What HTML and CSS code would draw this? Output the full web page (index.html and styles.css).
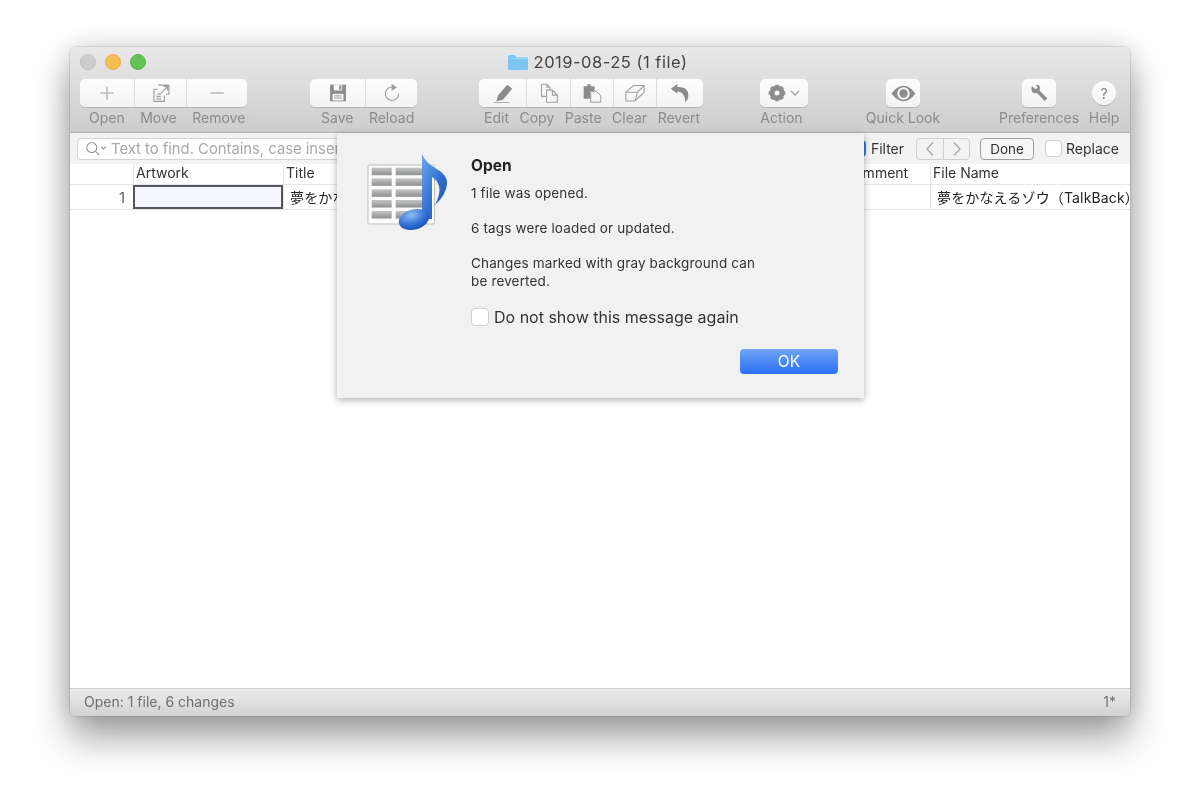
FILE: index.html
```html
<!DOCTYPE html>
<html lang="en">
<head>
<meta charset="utf-8">
<title>2019-08-25 (1 file)</title>
<link rel="stylesheet" href="styles.css">
</head>
<body>
<div class="window">
  <header class="chrome">
    <div class="titlebar">
      <div class="lights"><span class="light gray"></span><span class="light yellow"></span><span class="light green"></span></div>
      <div class="doc-title">
        <svg class="folder" viewBox="0 0 20 16"><path d="M0 2.500Q0 1 1.500 1H7l1.500 2H18.500Q20 3 20 4.500V14.500Q20 16 18.500 16H1.500Q0 16 0 14.500Z" fill="#7cc4f2"/><path d="M0 5H20V4.200Q20 3 18.500 3H8.500L7 4.500H0Z" fill="#9bd4f7"/></svg>
        <span>2019-08-25 (1 file)</span>
      </div>
      <div></div>
    </div>
    <div class="toolbar">
      <div class="group g1">
        <div class="btns">
          <div class="btn w54"><svg viewBox="0 0 24 24"><path d="M12 4V20M4 12H20" class="ln"/></svg></div>
          <div class="btn w52"><svg viewBox="0 0 24 24"><path d="M8 7.500H3.500V22H16V15M8 13H12M6.500 16H12M6.500 19H12" class="ln"/><path d="M8.500 2.500H21.500V13.500H18M20 4L12 12M15 4H20V9" class="ln"/></svg></div>
          <div class="btn w61"><svg viewBox="0 0 24 24"><path d="M4 12H20" class="ln"/></svg></div>
        </div>
        <div class="labels"><span>Open</span><span>Move</span><span>Remove</span></div>
      </div>
      <div class="group g2">
        <div class="btns">
          <div class="btn w55"><svg viewBox="0 0 24 24"><path d="M2.500 2H21.500V22H2.500Z" fill="#8c8c8c"/><path d="M7 2H17V9H7Z" fill="#f6f6f6"/><path d="M13.500 3H16V8H13.500Z" fill="#8c8c8c"/><path d="M5.500 13H18.500V21H5.500Z" fill="#f6f6f6"/><path d="M7.500 15.500H16.500M7.500 18H16.500" stroke="#8c8c8c" fill="none"/></svg></div>
          <div class="btn w52"><svg viewBox="0 0 24 24"><path d="M15 5.500A8 8 0 1 0 20 12.500" class="ln"/><path d="M11.500 1L18 5.500L11.500 9.500Z" fill="#a0a0a0"/></svg></div>
        </div>
        <div class="labels"><span>Save</span><span>Reload</span></div>
      </div>
      <div class="group g3">
        <div class="btns">
          <div class="btn w47"><svg viewBox="0 0 24 24"><path d="M6 15L17 2L23 7L12 20L4 22Z" fill="#8c8c8c"/><path d="M1 23.500H20" stroke="#b0b0b0" stroke-width="1.500"/></svg></div>
          <div class="btn w44"><svg viewBox="0 0 24 24"><path d="M3 1.500H9.500L13 5V8.500M3 1.500V16H9M9.500 1.500V5H13" class="ln"/><path d="M9 8.500H16L22 14.500V23H9Z M16 8.500V14.500H22" class="ln"/></svg></div>
          <div class="btn w43"><svg viewBox="0 0 24 24"><path d="M2 4H6.500V1.500H10.500V4H15V9.500H10V19H2Z" fill="#8c8c8c"/><path d="M10.500 10H17L22.500 15V23H10.500Z" fill="#f6f6f6" stroke="#8c8c8c"/></svg></div>
          <div class="btn w43"><svg viewBox="0 0 24 24"><path d="M1 11L10 3H23V11L12 21.500H1Z M1 11H15L23 3M15 11L12 21.500" class="ln"/></svg></div>
          <div class="btn w47"><svg viewBox="0 0 24 24"><path d="M1 7L9 1V13Z" fill="#8c8c8c"/><path d="M8 5Q22 4 22 15Q22 20 18 23Q19 11 8 10Z" fill="#8c8c8c"/></svg></div>
        </div>
        <div class="labels"><span>Edit</span><span>Copy</span><span>Paste</span><span>Clear</span><span>Revert</span></div>
      </div>
      <div class="group g4">
        <div class="btns">
          <div class="btn w48 action"><svg class="gear" viewBox="0 0 24 24"><circle cx="12" cy="12" r="6.500" fill="none" stroke="#8c8c8c" stroke-width="5"/><path d="M12 2V22M2 12H22M5 5L19 19M19 5L5 19" stroke="#8c8c8c" stroke-width="4"/><circle cx="12" cy="12" r="3" fill="#f6f6f6"/></svg><svg class="chev" viewBox="0 0 12 8"><path d="M2 2L6 6L10 2" class="ln"/></svg></div>
        </div>
        <div class="labels"><span>Action</span></div>
      </div>
      <div class="group g5">
        <div class="btns">
          <div class="btn solo eye"><svg viewBox="0 0 24 24"><path d="M0.500 12Q6 4.500 12 4.500Q18 4.500 23.500 12Q18 19.500 12 19.500Q6 19.500 0.500 12Z" fill="#8c8c8c"/><circle cx="12" cy="12" r="6" fill="#f6f6f6"/><circle cx="12" cy="12" r="4" fill="#8c8c8c"/></svg></div>
        </div>
        <div class="labels"><span>Quick Look</span></div>
      </div>
      <div class="group g6">
        <div class="btns">
          <div class="btn solo"><svg viewBox="0 0 24 24"><path d="M3.500 3.500L7.500 7.500L10.500 5.500L8 2.500Q11.500 1 13 4.500Q13.500 7 12.500 9L22 18.500L19 21.500L9.500 12Q5.500 13 3.500 10.500Q2 8 3.500 3.500Z" fill="#8c8c8c"/></svg></div>
        </div>
        <div class="labels"><span>Preferences</span></div>
      </div>
      <div class="group g7">
        <div class="btns"><div class="help">?</div></div>
        <div class="labels"><span>Help</span></div>
      </div>
    </div>
  </header>

  <div class="findbar">
    <div class="search">
      <svg class="lens" viewBox="0 0 24 16"><circle cx="7" cy="7" r="5.300" fill="none" stroke="#8e8e8e" stroke-width="1.100"/><path d="M11 11L15 15M17 6L19.500 8.500L22 6" fill="none" stroke="#8e8e8e" stroke-width="1.100"/></svg>
      <span>Text to find. Contains, case insensitive</span>
    </div>
    <span class="check blue"></span>
    <span class="find-label">Filter</span>
    <div class="nav"><span class="nav-btn"><svg viewBox="0 0 10 16"><path d="M8 1.500L2 8L8 14.500"/></svg></span><span class="nav-btn"><svg viewBox="0 0 10 16"><path d="M2 1.500L8 8L2 14.500"/></svg></span></div>
    <div class="done">Done</div>
    <span class="check"></span>
    <span class="find-label replace">Replace</span>
  </div>

  <div class="table">
    <div class="row head">
      <div class="cell"></div>
      <div class="cell">Artwork</div>
      <div class="cell">Title</div>
      <div class="cell">Comment</div>
      <div class="cell">File Name</div>
    </div>
    <div class="row data">
      <div class="cell num">1</div>
      <div class="cell art"></div>
      <div class="cell jp">夢をかなえるゾウ（TalkBack）</div>
      <div class="cell"></div>
      <div class="cell jp">夢をかなえるゾウ（TalkBack）</div>
    </div>
  </div>

  <footer class="status"><span>Open: 1 file, 6 changes</span><span>1*</span></footer>

  <div class="dialog">
    <svg class="app-icon" viewBox="0 0 82 80">
      <defs>
        <linearGradient id="bar" x1="0" y1="0" x2="0" y2="1"><stop offset="0" stop-color="#c4c6c6"/><stop offset="1" stop-color="#8e9090"/></linearGradient>
        <linearGradient id="note" x1="0" y1="0" x2="1" y2="1"><stop offset="0" stop-color="#6fa8ee"/><stop offset=".55" stop-color="#2f6fd0"/><stop offset="1" stop-color="#1d4fa8"/></linearGradient>
        <radialGradient id="head" cx=".45" cy=".25" r=".8"><stop offset="0" stop-color="#8fbdf2"/><stop offset=".6" stop-color="#2f6fd4"/><stop offset="1" stop-color="#1c4ea6"/></radialGradient>
      </defs>
      <rect x="1" y="12" width="66.500" height="59" rx="1.500" fill="#fbfbfb" stroke="#bdbdbd"/>
      <g fill="url(#bar)">
        <rect x="4.700" y="14.700" width="20" height="7.500"/><rect x="28.700" y="14.700" width="36" height="7.500"/>
        <rect x="4.700" y="25.300" width="20" height="7.500"/><rect x="28.700" y="25.300" width="36" height="7.500"/>
        <rect x="4.700" y="36.300" width="20" height="7.500"/><rect x="28.700" y="36.300" width="36" height="7.500"/>
        <rect x="4.700" y="47" width="20" height="7.500"/><rect x="28.700" y="47" width="36" height="7.500"/>
        <rect x="4.700" y="58" width="20" height="7.500"/><rect x="28.700" y="58" width="36" height="7.500"/>
      </g>
      <path d="M55 1Q59 10 68 15Q81 22 80 31Q79 42 68 52Q74 40 72 33Q70 27 65 24V66H55Z" fill="url(#note)"/>
      <ellipse cx="47" cy="66.500" rx="15.500" ry="10" transform="rotate(-15 47 66.500)" fill="url(#head)"/>
    </svg>
    <div class="dialog-body">
      <h1>Open</h1>
      <p class="first">1 file was opened.</p>
      <p>6 tags were loaded or updated.</p>
      <p>Changes marked with gray background can<br>be reverted.</p>
      <div class="dont"><span class="check large"></span><span>Do not show this message again</span></div>
      <div class="actions"><div class="ok">OK</div></div>
    </div>
  </div>
</div>
</body>
</html>
```
FILE: styles.css
```css
* { box-sizing: border-box; }
html, body { margin: 0; height: 100%; background: #fff; overflow: hidden; }
body { padding: 47px 70px 93px; font-family: Inter, "Noto Sans CJK JP", sans-serif; color: #333; }

.window {
  position: relative;
  height: 669px;
  display: flex;
  flex-direction: column;
  background: #fff;
  border-radius: 6px;
  overflow: visible;
  filter: blur(.35px);
  box-shadow: 0 0 0 1px rgba(0,0,0,.09), 0 22px 38px rgba(0,0,0,.36), 0 0 28px rgba(0,0,0,.16);
}

.chrome {
  height: 86px;
  border-radius: 6px 6px 0 0;
  border-bottom: 1px solid #b4b4b4;
  background: linear-gradient(#e8e8e8, #cdcdcd);
}
.titlebar {
  height: 32px;
  display: grid;
  grid-template-columns: 1fr auto 1fr;
  align-items: center;
  padding: 0 10px;
}
.lights { display: flex; gap: 9px; margin-bottom: 2px; }
.light { width: 16px; height: 16px; border-radius: 50%; }
.light.gray { background: #cdcdcd; border: 1px solid #bdbdbd; }
.light.yellow { background: #f6bd4f; border: 1px solid #e6ae45; }
.light.green { background: #61c454; border: 1px solid #55b748; }
.doc-title { display: flex; align-items: center; gap: 6px; font-size: 16.500px; letter-spacing: .5px; color: #444; padding-right: 5px; margin-bottom: 2px; }
.folder { width: 20px; height: 16px; }

.toolbar { display: flex; padding-left: 10px; }
.group { display: flex; flex-direction: column; }
.btns { display: flex; height: 28px; justify-content: center; }
.labels { display: flex; font-size: 14px; line-height: 17px; margin-top: 2px; color: #8b8b8b; white-space: nowrap; }
.g1 .labels { padding-left: 9px; gap: 15.500px; }
.g2 .labels { padding-left: 11px; gap: 15.500px; }
.g3 .labels { padding-left: 5px; gap: 10.500px; }
.g4 .labels, .g5 .labels, .g6 .labels, .g7 .labels { justify-content: center; }
.g4 .labels { padding-right: 5px; }
.g2 { margin-left: 63px; }
.g3 { margin-left: 62px; }
.g4 { margin-left: 57px; }
.g5 { margin-left: 58px; width: 74px; }
.g6 { margin-left: 59px; width: 80px; }
.g7 { margin-left: 9px; width: 32px; }
.w43 { width: 43px; } .w44 { width: 44px; } .w47 { width: 47px; } .w48 { width: 48px; }
.w52 { width: 52px; } .w54 { width: 54px; } .w55 { width: 55px; } .w61 { width: 61px; }
.btn {
  height: 28px;
  display: flex;
  align-items: center;
  justify-content: center;
  background: linear-gradient(#fdfdfd, #f3f3f3);
  box-shadow: 0 1px 0 rgba(0,0,0,.16);
}
.btn + .btn { border-left: 1px solid #dcdcdc; }
.btn svg { width: 20px; height: 20px; }
.ln { fill: none; stroke: #a0a0a0; stroke-width: 1.300; }
.btns .btn:first-child { border-radius: 5px 0 0 5px; }
.btns .btn:last-child { border-radius: 0 5px 5px 0; }
.btns .btn:only-child { border-radius: 5px; }
.btn.solo { width: 34px; }
.btn.eye svg { width: 25px; height: 25px; }
.btn.action { gap: 2px; }
.btn.action .gear { width: 20px; height: 20px; }
.btn.action .chev { width: 12px; height: 8px; }
.help {
  width: 24px; height: 24px; margin-top: 2px;
  border-radius: 50%;
  background: linear-gradient(#fdfdfd, #f3f3f3);
  box-shadow: 0 1px 0 rgba(0,0,0,.18);
  display: flex; align-items: center; justify-content: center;
  font-size: 15px; color: #8b8b8b;
}

.findbar {
  height: 31px;
  display: flex;
  align-items: center;
  padding: 0 11px 0 7px;
  background: #f3f3f3;
  font-size: 14px;
}
.search {
  flex: 1;
  min-width: 0;
  height: 22px;
  display: flex;
  align-items: center;
  gap: 3px;
  padding-left: 7px;
  background: #fff;
  border: 1px solid #d4d4d4;
  border-radius: 4px;
  color: #a8a8a8;
  font-size: 14.800px;
  overflow: hidden;
  white-space: nowrap;
}
.lens { width: 23px; height: 15px; flex: none; }
.check { flex: none; width: 17px; height: 17px; background: #fff; border: 1px solid #cfcfcf; border-radius: 4px; }
.check.blue { background: #2f76ee; border-color: #2f76ee; margin-left: 5px; }
.find-label { margin-left: 5px; color: #333; }
.find-label.replace { margin-left: 4px; }
.nav { display: flex; margin-left: 12px; height: 22px; border: 1px solid #cfcfcf; border-radius: 4px; }
.nav-btn { width: 26px; display: flex; align-items: center; justify-content: center; }
.nav-btn + .nav-btn { border-left: 1px solid #cfcfcf; }
.nav-btn svg { width: 10px; height: 16px; fill: none; stroke: #a4a4a4; stroke-width: 1.200; }
.done {
  margin-left: 10px; margin-right: 11px;
  width: 54px; height: 22px;
  display: flex; align-items: center; justify-content: center;
  border: 1px solid #9d9d9d; border-radius: 4px;
  background: #f6f6f6; font-size: 13.500px; color: #333;
}

.table { flex: 1; min-height: 0; overflow: hidden; font-size: 14px; }
.row { display: grid; grid-template-columns: 63px 150px 558px 89px 1fr; }
.row.head { height: 21px; background: #fff; border-bottom: 1px solid #e6e6e6; color: #333; }
.row.head .cell { display: flex; align-items: center; padding: 0 0 3px 2px; border-left: 1px solid #e4e4e4; height: 20px; overflow: hidden; white-space: nowrap; }
.row.head .cell:first-child { border-left: 0; }
.row.data { height: 25px; border-bottom: 1px solid #e2e2e2; }
.row.data .cell { display: flex; align-items: center; padding-left: 6px; border-left: 1px solid #e2e2e2; white-space: nowrap; overflow: hidden; }
.row.data .cell:first-child { border-left: 0; justify-content: flex-end; padding: 0 8px 0 0; color: #666; font-size: 15px; }
.row.data .cell.art { background: #f4f5fe; border: 2px solid #55555f; padding: 0; height: 24px; }
.jp { font-family: Inter, "Noto Sans CJK JP", sans-serif; color: #222; letter-spacing: .15px; }

.status {
  height: 28px;
  display: flex;
  justify-content: space-between;
  align-items: center;
  padding: 0 14px 2px;
  border-top: 1px solid #d0d0d0;
  border-radius: 0 0 6px 6px;
  background: linear-gradient(#ececec, #d2d2d2);
  font-size: 14px;
  color: #707070;
}

.dialog {
  position: absolute;
  left: 267px;
  top: 86px;
  width: 527px;
  height: 265px;
  display: flex;
  padding: 20px 26px 0 30px;
  background: #f1f1f1;
  box-shadow: 0 2px 7px rgba(0,0,0,.32);
  color: #333;
}
.app-icon { width: 82px; height: 80px; flex: none; }
.dialog-body { margin-left: 22px; flex: 1; min-width: 0; font-size: 13.500px; }
.dialog-body h1 { margin: 3px 0 0; font-size: 15.500px; line-height: 20px; font-weight: 700; color: #222; }
.dialog-body p { margin: 0 0 17.500px; line-height: 17.500px; letter-spacing: .15px; }
.dialog-body p.first { margin-top: 9px; }
.dont { display: flex; align-items: center; gap: 5px; margin-top: -1px; font-size: 16px; color: #333; }
.check.large { width: 18px; height: 18px; }
.actions { display: flex; justify-content: flex-end; margin-top: 22px; }
.ok {
  width: 98px; height: 25px;
  display: flex; align-items: center; justify-content: center;
  border-radius: 4px;
  background: linear-gradient(#6fa4f7, #2b6ff6);
  color: #fff; font-size: 15.500px;
}
```
